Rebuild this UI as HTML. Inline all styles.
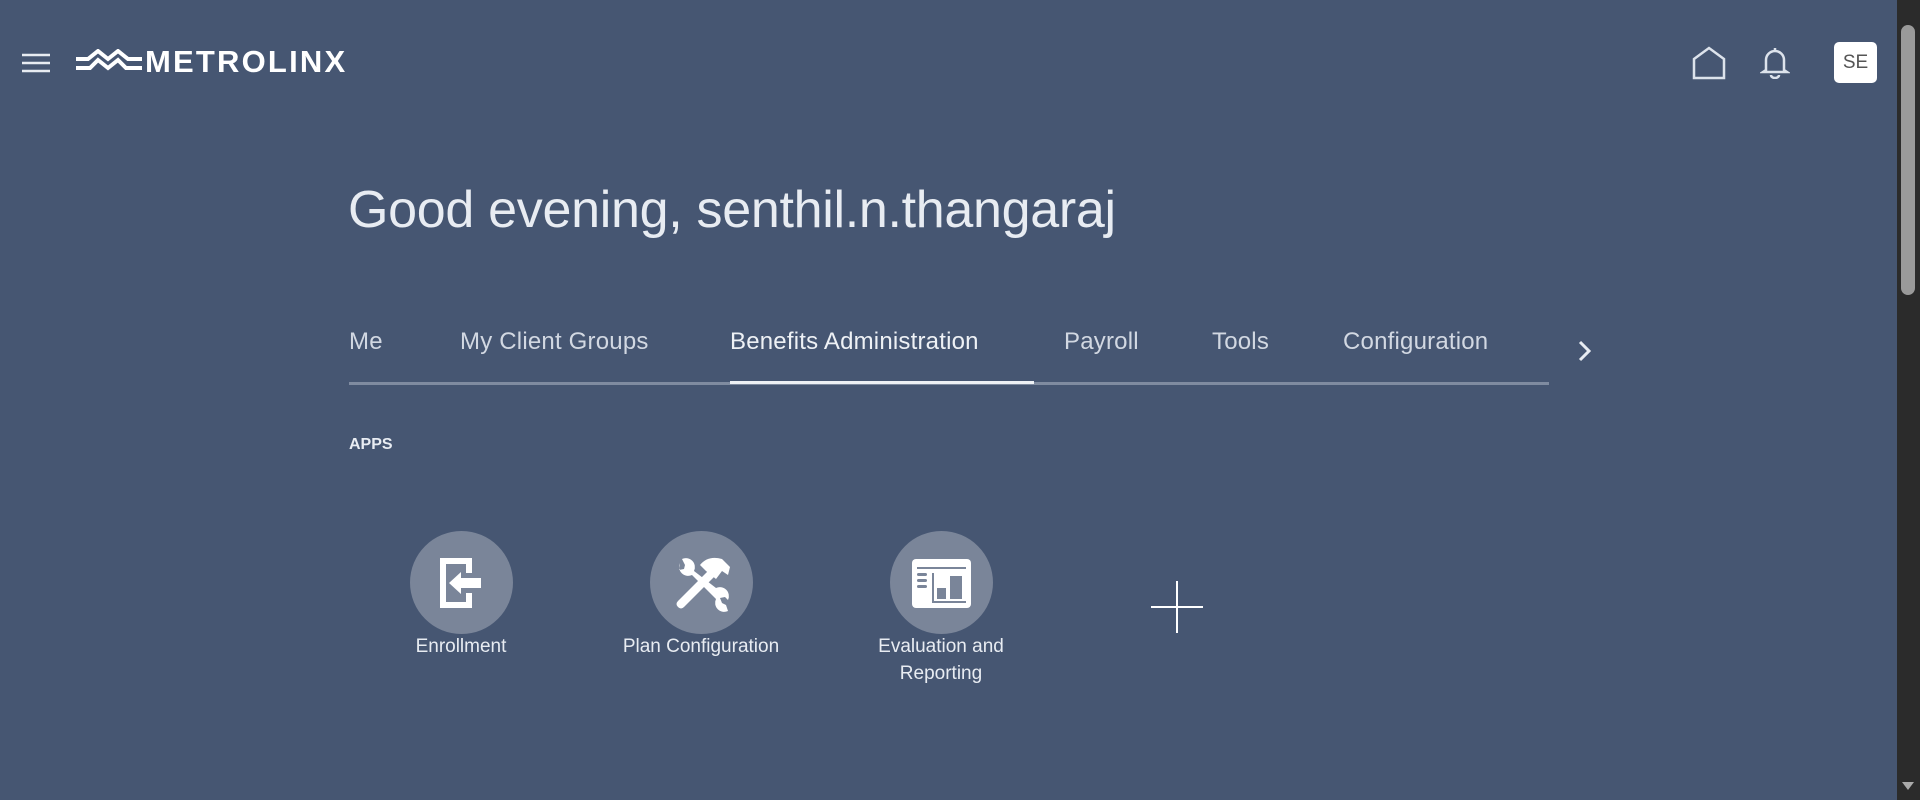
<!DOCTYPE html>
<html><head><meta charset="utf-8"><style>
html,body{margin:0;padding:0;width:1920px;height:800px;overflow:hidden;background:#465672;font-family:"Liberation Sans",sans-serif;color:#e8ecf2}
.abs{position:absolute}
.tab{position:absolute;top:328px;font-size:24px;color:#d2d8e2;white-space:nowrap;letter-spacing:0.2px}
.circ{position:absolute;top:531px;width:103px;height:103px;border-radius:50%;background:#7a8599}
.lbl{position:absolute;width:240px;text-align:center;font-size:19px;color:#e8ecf2;line-height:27px;top:633px}
</style></head><body>
<svg class="abs" style="left:22px;top:53px" width="28" height="20"><g stroke="#e8ecf2" stroke-width="2.4"><line x1="0" y1="2" x2="28" y2="2"/><line x1="0" y1="10" x2="28" y2="10"/><line x1="0" y1="18" x2="28" y2="18"/></g></svg>
<svg class="abs" style="left:76px;top:49px" width="66" height="24"><g fill="none" stroke="#fff" stroke-width="4"><path d="M0 10 H12 L22 2 L32 10 L42 2 L52 10 H66"/><path d="M0 19 H14 L22 11 L32 19 L42 11 L50 19 H66"/></g></svg>
<div class="abs" style="left:145px;top:44px;font-size:31px;font-weight:bold;color:#fff;letter-spacing:2.2px">METROLINX</div>
<svg class="abs" style="left:1692px;top:46px" width="34" height="34"><path d="M2 32 V13 L17 2 L32 13 V32 Z" fill="none" stroke="#dde3ec" stroke-width="2.5"/></svg>
<svg class="abs" style="left:1760px;top:47px" width="30" height="32"><g fill="none" stroke="#dde3ec" stroke-width="2.5"><path d="M6 23 V13 a9 9 0 0 1 18 0 V23 l3 2 H3 Z"/><path d="M11 28 a4 3 0 0 0 8 0"/><line x1="15" y1="1" x2="15" y2="4"/></g></svg>
<div class="abs" style="left:1834px;top:42px;width:43px;height:41px;background:#fff;border-radius:5px;color:#555;font-size:19px;text-align:center;line-height:41px">SE</div>
<div class="abs" style="left:1897px;top:0;width:23px;height:800px;background:#2b2b2b"></div>
<div class="abs" style="left:1901px;top:25px;width:14px;height:270px;background:#9a9a9a;border-radius:7px"></div>
<svg class="abs" style="left:1902px;top:782px" width="12" height="10"><path d="M0 0 H12 L6 8Z" fill="#aaa"/></svg>
<div class="abs" style="left:348px;top:180px;font-size:52px;color:#e8ecf2;white-space:nowrap;letter-spacing:-0.3px">Good evening, senthil.n.thangaraj</div>
<div class="tab" style="left:349px">Me</div>
<div class="tab" style="left:460px">My Client Groups</div>
<div class="tab" style="left:730px;color:#eef1f5">Benefits Administration</div>
<div class="tab" style="left:1064px">Payroll</div>
<div class="tab" style="left:1212px">Tools</div>
<div class="tab" style="left:1343px">Configuration</div>
<div class="abs" style="left:349px;top:382px;width:1200px;height:3px;background:#7f8ba0"></div>
<div class="abs" style="left:730px;top:381px;width:304px;height:3px;background:#eef1f5"></div>
<svg class="abs" style="left:1576px;top:339px" width="18" height="24"><path d="M4 3 L13 12 L4 21" fill="none" stroke="#e8ecf2" stroke-width="3"/></svg>
<div class="abs" style="left:349px;top:436px;font-size:16px;font-weight:bold;color:#e8ecf2">APPS</div>
<div class="circ" style="left:410px"></div>
<div class="circ" style="left:650px"></div>
<div class="circ" style="left:890px"></div>
<svg class="abs" style="left:410px;top:531px" width="103" height="103"><g fill="#fff"><path d="M30 27 H62 V42 H56 V33 H36 V71 H56 V62 H62 V77 H30 Z"/><path d="M39 52 L51 41 V47 H71 V57 H51 V63 Z"/></g></svg>
<svg class="abs" style="left:650px;top:531px" width="103" height="103"><g fill="#fff"><path d="M28 70 L58 40 L64 46 L34 76 Q31 79 28 76 Q25 73 28 70Z"/><path d="M50 34 Q58 24 72 28 L80 36 L78 44 L72 40 L66 48 L56 40 Z"/><path d="M30 32 a9 9 0 0 0 12 12 L66 68 a9 9 0 0 0 12 12 l-2-6 -4-2 -2-5 5-1 3 3 a9 9 0 0 0 -12 -12 L44 40 a9 9 0 0 0 -12 -12 l3 6 -1 4 -5 1Z"/></g></svg>
<svg class="abs" style="left:890px;top:531px" width="103" height="103"><g fill="#fff"><rect x="22" y="28" width="59" height="49" rx="4"/></g><g fill="#7a8599"><rect x="27" y="36" width="49" height="2"/><rect x="27" y="42" width="10" height="3" rx="1.5"/><rect x="27" y="48" width="10" height="3" rx="1.5"/><rect x="27" y="54" width="10" height="3" rx="1.5"/><rect x="42" y="42" width="2" height="30"/><rect x="42" y="70" width="34" height="2"/><rect x="47" y="57" width="9" height="11"/><rect x="60" y="45" width="12" height="23"/></g></svg>
<div class="lbl" style="left:341px">Enrollment</div>
<div class="lbl" style="left:581px">Plan Configuration</div>
<div class="lbl" style="left:821px">Evaluation and<br>Reporting</div>
<svg class="abs" style="left:1151px;top:581px" width="52" height="52"><g stroke="#fff" stroke-width="2"><line x1="26" y1="0" x2="26" y2="52"/><line x1="0" y1="26" x2="52" y2="26"/></g></svg>
</body></html>
